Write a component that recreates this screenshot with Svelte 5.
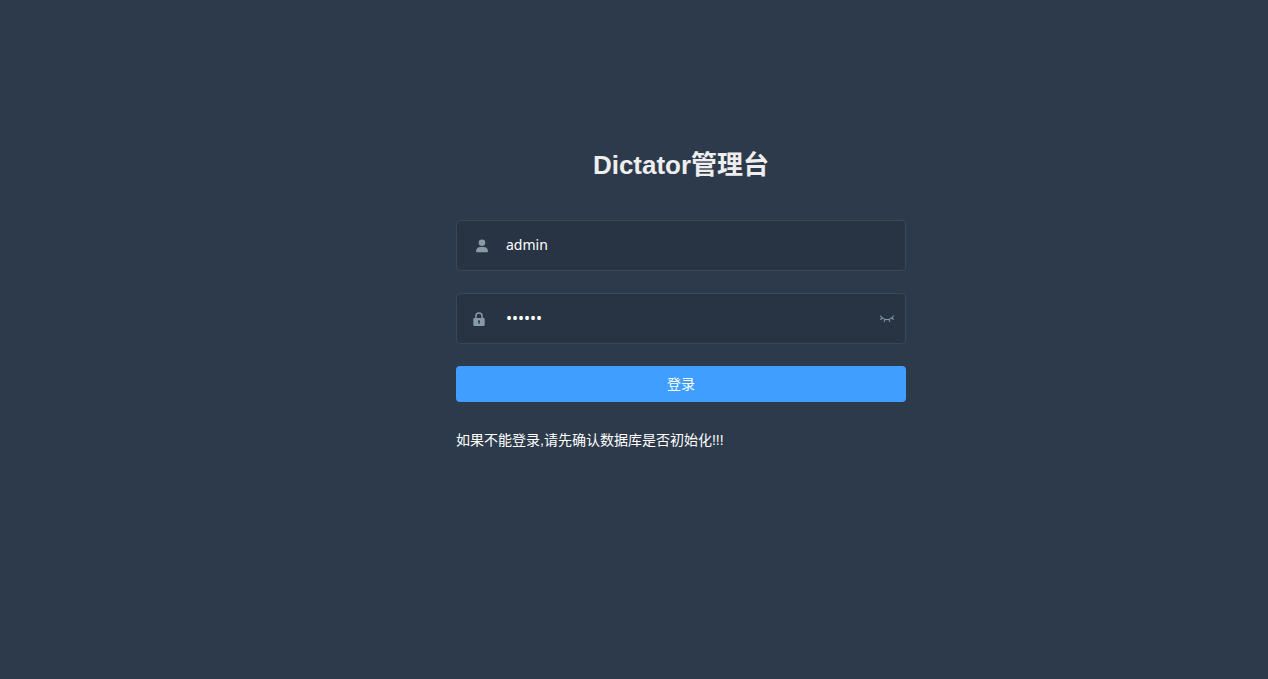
<script>
  let username = $state('admin');
  let password = $state('111111');
  let visible = $state(false);

  function submit(event) {
    event.preventDefault();
  }
</script>

<main class="login">
  <form class="login-form" onsubmit={submit}>
    <h1 class="title">Dictator管理台</h1>

    <div class="field">
      <label class="prefix user" for="username" aria-label="username">
        <svg width="14" height="14" viewBox="0 0 14 14" fill="currentColor" aria-hidden="true">
          <circle cx="7" cy="3.7" r="3.3" />
          <path d="M1 12.2C1 9.6 3 8 5.400 8h3.200C11 8 13 9.600 13 12.200q0 1.100-1.100 1.100H2.100Q1 13.300 1 12.200z" />
        </svg>
      </label>
      <input id="username" type="text" autocomplete="off" bind:value={username} />
    </div>

    <div class="field">
      <label class="prefix" for="password" aria-label="password">
        <svg width="14" height="14" viewBox="0 0 14 14" aria-hidden="true">
          <path d="M3.900 6.500V4a3.100 3.100 0 0 1 6.200 0v2.500" fill="none" stroke="currentColor" stroke-width="1.500" />
          <path fill="currentColor" fill-rule="evenodd" d="M2.500 6h9q1.200 0 1.200 1.200v5.600q0 1.200-1.200 1.200h-9q-1.200 0-1.200-1.200V7.200Q1.300 6 2.500 6zM7 8.200a1.100 1.100 0 0 0-.6 2V12h1.200v-1.800a1.100 1.100 0 0 0-.6-2z" />
        </svg>
      </label>
      <input id="password" type={visible ? 'text' : 'password'} autocomplete="off" bind:value={password} />
      <button class="toggle" type="button" aria-label="toggle password" onclick={() => (visible = !visible)}>
        <svg width="14" height="8" viewBox="0 0 14 8" fill="none" stroke="currentColor" stroke-width="1.100" stroke-linecap="round" aria-hidden="true">
          <path d="M.6 1Q3.200 4.600 7 4.600T13.400 1M2.500 3L.6 4.300M5 4.400L4.200 6.600M9 4.400l.8 2.200M11.500 3l1.900 1.300" />
        </svg>
      </button>
    </div>

    <button class="submit" type="submit">登录</button>
    <p class="tip">如果不能登录,请先确认数据库是否初始化!!!</p>
  </form>
</main>

<style>
  :global(body) {
    margin: 0;
    background: #2d3a4b;
  }

  .login {
    box-sizing: border-box;
    min-height: 100vh;
    padding: 150px 0 32px 94px;
    background: #2d3a4b;
    font-family: "Liberation Sans", "Noto Sans CJK SC", sans-serif;
  }

  .login-form {
    display: flex;
    flex-direction: column;
    gap: 22px;
    max-width: 450px;
    margin: 0 auto;
  }

  .title {
    margin: 0 0 18px;
    color: #eee;
    font-size: 26px;
    line-height: 30px;
    font-weight: 700;
    text-align: center;
  }

  .field {
    box-sizing: border-box;
    display: flex;
    align-items: center;
    height: 51px;
    border: 1px solid rgba(255, 255, 255, 0.1);
    border-radius: 5px;
    background: #283443;
  }

  .prefix {
    display: flex;
    flex: none;
    box-sizing: border-box;
    width: 34px;
    padding-left: 15px;
    color: #889aa4;
  }

  .prefix.user {
    padding-left: 18px;
  }

  input {
    flex: 1;
    min-width: 0;
    height: 47px;
    box-sizing: border-box;
    padding: 0 15px 2px;
    border: 0;
    outline: 0;
    background: transparent;
    color: #fff;
    font-family: "Noto Sans", sans-serif;
    font-size: 14px;
  }

  input[type="password"] {
    font-size: 16px;
  }

  .toggle {
    display: flex;
    padding: 8px 11px;
    border: 0;
    background: transparent;
    color: #889aa4;
    cursor: pointer;
  }

  .submit {
    height: 36px;
    padding: 0 0 2px;
    border: 0;
    border-radius: 4px;
    background: #409eff;
    color: #fff;
    font-family: inherit;
    font-size: 14px;
    font-weight: 400;
    cursor: pointer;
  }

  .tip {
    margin: 6px 0 0;
    color: #fff;
    font-size: 14px;
    line-height: 20px;
  }
</style>
